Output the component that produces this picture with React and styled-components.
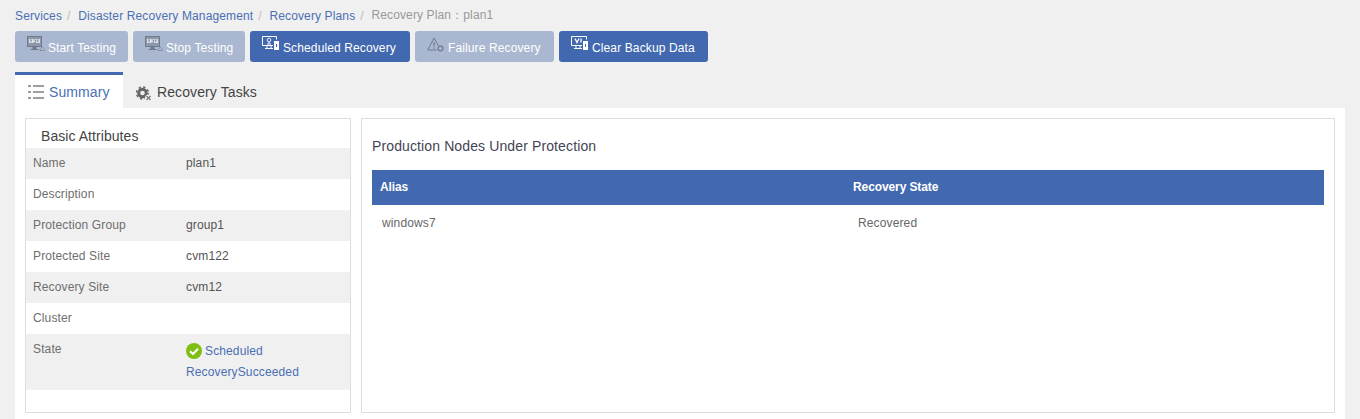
import React from 'react'
import styled, { createGlobalStyle } from 'styled-components'

const GlobalStyle = createGlobalStyle`
  html, body { margin: 0; padding: 0; height: 100%; overflow: hidden; }
  body {
    background: #f0f0f0;
    font-family: "Liberation Sans", Arial, sans-serif;
    font-size: 12px;
    letter-spacing: 0.13px;
  }
`

const Page = styled.div`
  height: 419px;
  padding: 0 15px;
  box-sizing: border-box;
  overflow: hidden;
`
const Breadcrumb = styled.div`
  height: 31px;
  display: flex;
  align-items: center;
  font-size: 12px;
  color: #999;
`
const Crumb = styled.span`
  color: ${p => (p.$last ? '#999' : '#4a6fb3')};
`
const Sep = styled.span`
  color: #bbb;
  margin: 0 7.7px 0 5px;
`
const Toolbar = styled.div`
  display: flex;
  gap: 5px;
`
const Button = styled.div`
  height: 31px;
  width: ${p => p.$w}px;
  box-sizing: border-box;
  padding: 2px 0 0 12px;
  display: flex;
  align-items: center;
  gap: 3px;
  border-radius: 3px;
  color: #fff;
  font-size: 12px;
  letter-spacing: 0.12px;
  background: ${p => (p.$off ? '#a9b8d0' : '#4269b0')};
  white-space: nowrap;
`
const Tabs = styled.div`
  margin-top: 10px;
  height: 36px;
  display: flex;
`
const Tab = styled.div`
  box-sizing: border-box;
  height: 36px;
  width: ${p => p.$w}px;
  display: flex;
  align-items: center;
  gap: 5px;
  padding-left: 13px;
  font-size: 14px;
  letter-spacing: 0.1px;
  color: ${p => (p.$active ? '#4a6fb3' : '#444')};
  background: ${p => (p.$active ? '#fff' : 'transparent')};
  border-top: 3px solid ${p => (p.$active ? '#4269b0' : 'transparent')};
`
const Panel = styled.div`
  background: #fff;
  padding: 10px;
  display: flex;
  gap: 10px;
  height: 311px;
  box-sizing: border-box;
`
const Card = styled.div`
  height: 295px;
  box-sizing: border-box;
  border: 1px solid #ddd;
  background: #fff;
`
const LeftCard = styled(Card)`
  width: 326px;
  flex: none;
`
const RightCard = styled(Card)`
  flex: 1;
  padding: 0 10px;
`
const CardTitle = styled.div`
  height: 29px;
  line-height: 34px;
  padding-left: 15px;
  font-size: 14px;
  letter-spacing: 0.06px;
  color: #444;
`
const Row = styled.div`
  display: flex;
  height: ${p => p.$h || 31}px;
  padding-left: 7px;
  line-height: 30px;
  background: ${p => (p.$odd ? '#f0f0f0' : '#fff')};
`
const Label = styled.div`
  width: 153px;
  flex: none;
  color: #6e6e6e;
`
const Value = styled.div`
  color: #555;
`
const StateValue = styled.div`
  color: #4a6fb3;
  width: 130px;
  line-height: 21px;
  padding-top: 7px;
`
const StateIcon = styled.svg`
  vertical-align: -4px;
  margin-right: 3px;
`
const Heading = styled.div`
  font-size: 14px;
  letter-spacing: 0.12px;
  color: #445;
  height: 51px;
  line-height: 55px;
`
const TableHead = styled.div`
  display: grid;
  grid-template-columns: 473px 1fr;
  height: 35px;
  line-height: 34px;
  background: #4269b0;
  color: #fff;
  font-weight: bold;
  letter-spacing: -0.1px;
  padding-left: 8px;
`
const TableRow = styled.div`
  display: grid;
  grid-template-columns: 476px 1fr;
  height: 35px;
  line-height: 37px;
  padding-left: 10px;
  color: #666;
`

const TestIcon = ({ c = '#6f7b8c' }) => (
  <svg width="18" height="16" viewBox="0 0 18 16" fill="none" style={{ marginTop: -7, flex: 'none' }}>
    <rect x="0.5" y="0.5" width="14" height="10" fill="#8d98aa" stroke={c} />
    <rect x="2" y="3" width="11" height="4" fill="#dfe4ec" />
    <path d="M3 4h2M4 4v2.5M6.5 4h2v2.5h-2M9.5 4h2.5M10.7 4v2.5" stroke={c} strokeWidth="0.7" />
    <path d="M6 11h3v2H6zM3.5 13.5h8" stroke={c} strokeWidth="1" fill={c} />
    <path d="M13 14.5l2-3.5 2.5 3.5z" fill="#c5ccd8" stroke={c} strokeWidth="0.7" />
  </svg>
)

const ScheduleIcon = () => (
  <svg width="18" height="16" viewBox="0 0 18 16" fill="none" stroke="#fff" style={{ marginTop: -7, flex: 'none' }}>
    <path d="M11 9.5H0.5V0.5h14v3" />
    <circle cx="7" cy="4" r="1.8" strokeWidth="0.9" />
    <path d="M7 6v2M5 8h4" strokeWidth="0.9" />
    <path d="M5 10v2M9 10v2M3 12.5h8" />
    <rect x="12" y="5" width="5" height="9" fill="#fff" stroke="none" />
    <rect x="14" y="8" width="1" height="3" fill="#4269b0" stroke="none" />
  </svg>
)

const WarnIcon = () => (
  <svg width="18" height="16" viewBox="0 0 18 16" fill="none" stroke="#6f7b8c" style={{ marginTop: -5, flex: 'none' }}>
    <path d="M7 1L0.8 13h9" />
    <path d="M7 1l4.5 8" />
    <path d="M7 5v4.5M7 10.5v1.3" strokeWidth="1.2" />
    <circle cx="13.5" cy="11.5" r="2.4" strokeWidth="1.2" />
  </svg>
)

const ClearIcon = () => (
  <svg width="18" height="16" viewBox="0 0 18 16" fill="none" stroke="#fff" style={{ marginTop: -7, flex: 'none' }}>
    <path d="M11 9.5H0.5V0.5h15v3" />
    <path d="M4 2.5l2 4 2-4" strokeWidth="1.3" />
    <path d="M10 2.5v4" strokeWidth="1.3" />
    <path d="M5 10v2M9 10v2M3 12.5h8" />
    <rect x="12" y="5" width="5" height="9" fill="#fff" stroke="none" />
    <rect x="14" y="8" width="1" height="3" fill="#4269b0" stroke="none" />
  </svg>
)

const ListIcon = () => (
  <svg width="16" height="14" viewBox="0 0 16 14" fill="none" stroke="#808080" style={{ flex: 'none' }}>
    <path d="M0 1h3M5 1h11M0 7h3M5 7h11M0 13h3M5 13h11" strokeWidth="1.4" />
  </svg>
)

const GearIcon = () => (
  <svg width="16" height="15" viewBox="0 0 16 15" style={{ flex: 'none', marginTop: 3 }}>
    <circle cx="6.5" cy="7" r="3.8" fill="none" stroke="#666" strokeWidth="3" />
    <circle cx="6.5" cy="7" r="6" fill="none" stroke="#666" strokeWidth="1.4" strokeDasharray="2.4 2.3" />
    <circle cx="12.5" cy="12" r="3.5" fill="#f0f0f0" />
    <path d="M10.5 10l4 4M14.5 10l-4 4" stroke="#777" strokeWidth="1.2" />
  </svg>
)

const rows = [
  ['Name', 'plan1'],
  ['Description', ''],
  ['Protection Group', 'group1'],
  ['Protected Site', 'cvm122'],
  ['Recovery Site', 'cvm12'],
  ['Cluster', ''],
]

export default function App() {
  return (
    <Page>
      <GlobalStyle />
      <Breadcrumb>
        <Crumb>Services</Crumb><Sep>/</Sep>
        <Crumb>Disaster Recovery Management</Crumb><Sep>/</Sep>
        <Crumb>Recovery Plans</Crumb><Sep>/</Sep>
        <Crumb $last>Recovery Plan：plan1</Crumb>
      </Breadcrumb>
      <Toolbar>
        <Button $off $w={113}><TestIcon />Start Testing</Button>
        <Button $off $w={112}><TestIcon />Stop Testing</Button>
        <Button $w={160}><ScheduleIcon />Scheduled Recovery</Button>
        <Button $off $w={139}><WarnIcon />Failure Recovery</Button>
        <Button $w={149}><ClearIcon />Clear Backup Data</Button>
      </Toolbar>
      <Tabs>
        <Tab $active $w={108}><ListIcon />Summary</Tab>
        <Tab $w={150}><GearIcon />Recovery Tasks</Tab>
      </Tabs>
      <Panel>
        <LeftCard>
          <CardTitle>Basic Attributes</CardTitle>
          {rows.map((r, i) => (
            <Row key={r[0]} $odd={i % 2 === 0}>
              <Label>{r[0]}</Label>
              <Value>{r[1]}</Value>
            </Row>
          ))}
          <Row $odd $h={56}>
            <Label>State</Label>
            <StateValue>
              <StateIcon width="16" height="16" viewBox="0 0 16 16">
                <circle cx="8" cy="8" r="8" fill="#7fbe12" />
                <path d="M4 8.2l3 2.8 5-5.2" fill="none" stroke="#fff" strokeWidth="2" />
              </StateIcon>
              Scheduled RecoverySucceeded
            </StateValue>
          </Row>
        </LeftCard>
        <RightCard>
          <Heading>Production Nodes Under Protection</Heading>
          <TableHead><span>Alias</span><span>Recovery State</span></TableHead>
          <TableRow><span>windows7</span><span>Recovered</span></TableRow>
        </RightCard>
      </Panel>
    </Page>
  )
}
